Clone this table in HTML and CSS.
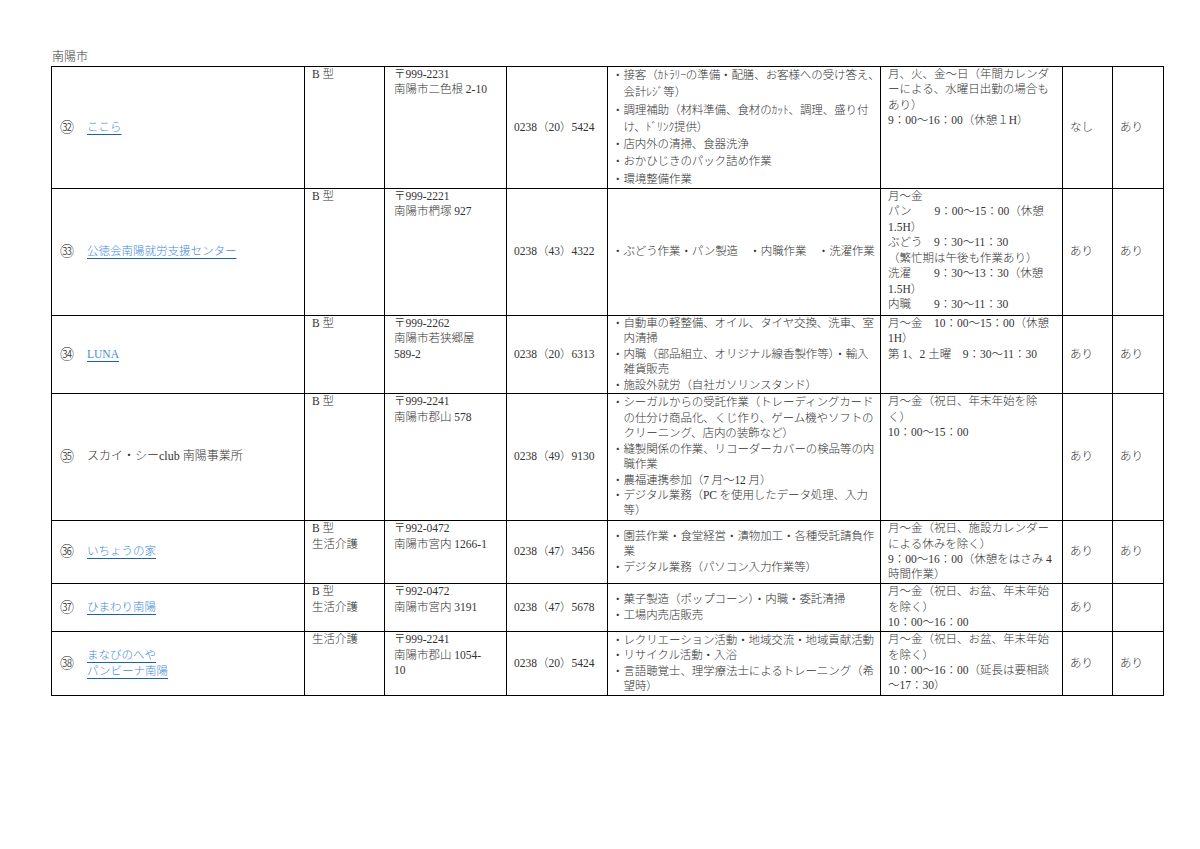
FILE: index.html
```html
<!DOCTYPE html>
<html lang="ja">
<head>
<meta charset="utf-8">
<title>南陽市</title>
<link rel="stylesheet" href="styles.css">
</head>
<body>
<div class="page">
  <div class="city">南陽市</div>
  <table class="list">
    <colgroup>
      <col class="c-name"><col class="c-type"><col class="c-addr"><col class="c-tel">
      <col class="c-work"><col class="c-time"><col class="c-a"><col class="c-b">
    </colgroup>
    <tr class="r1">
      <td class="name"><div class="nm"><span class="no">㉜</span><span class="lk"><a href="#">ここら</a></span></div></td>
      <td class="type">B 型</td>
      <td class="addr">〒999-2231<br>南陽市二色根 2-10</td>
      <td class="tel">0238（20）5424</td>
      <td class="work loose">
        <div class="it">・接客（ｶﾄﾗﾘｰの準備・配膳、お客様への受け答え、<br>会計ﾚｼﾞ等）</div>
        <div class="it">・調理補助（材料準備、食材のｶｯﾄ、調理、盛り付<br>け、ﾄﾞﾘﾝｸ提供）</div>
        <div class="it">・店内外の清掃、食器洗浄</div>
        <div class="it">・おかひじきのパック詰め作業</div>
        <div class="it">・環境整備作業</div>
      </td>
      <td class="time">月、火、金～日（年間カレンダ<br>ーによる、水曜日出勤の場合も<br>あり）<br>9：00～16：00（休憩１H）</td>
      <td class="yn">なし</td>
      <td class="yn">あり</td>
    </tr>
    <tr class="r2">
      <td class="name"><div class="nm"><span class="no">㉝</span><span class="lk"><a href="#">公徳会南陽就労支援センター</a></span></div></td>
      <td class="type">B 型</td>
      <td class="addr">〒999-2221<br>南陽市椚塚 927</td>
      <td class="tel">0238（43）4322</td>
      <td class="work">
        <div class="it">・ぶどう作業・パン製造　・内職作業　・洗濯作業</div>
      </td>
      <td class="time">月～金<br>パン　　9：00～15：00（休憩<br>1.5H）<br>ぶどう　9：30～11：30<br>（繁忙期は午後も作業あり）<br>洗濯　　9：30～13：30（休憩<br>1.5H）<br>内職　　9：30～11：30</td>
      <td class="yn">あり</td>
      <td class="yn">あり</td>
    </tr>
    <tr class="r3">
      <td class="name"><div class="nm"><span class="no">㉞</span><span class="lk"><a href="#">LUNA</a></span></div></td>
      <td class="type">B 型</td>
      <td class="addr">〒999-2262<br>南陽市若狭郷屋<br>589-2</td>
      <td class="tel">0238（20）6313</td>
      <td class="work">
        <div class="it">・自動車の軽整備、オイル、タイヤ交換、洗車、室<br>内清掃</div>
        <div class="it">・内職（部品組立、オリジナル線香製作等）・輸入<br>雑貨販売</div>
        <div class="it">・施設外就労（自社ガソリンスタンド）</div>
      </td>
      <td class="time">月～金　10：00～15：00（休憩<br>1H）<br>第 1、2 土曜　9：30～11：30</td>
      <td class="yn">あり</td>
      <td class="yn">あり</td>
    </tr>
    <tr class="r4">
      <td class="name"><div class="nm"><span class="no">㉟</span><span class="plain">スカイ・シーclub 南陽事業所</span></div></td>
      <td class="type">B 型</td>
      <td class="addr">〒999-2241<br>南陽市郡山 578</td>
      <td class="tel">0238（49）9130</td>
      <td class="work">
        <div class="it">・シーガルからの受託作業（トレーディングカード<br>の仕分け商品化、くじ作り、ゲーム機やソフトの<br>クリーニング、店内の装飾など）</div>
        <div class="it">・縫製関係の作業、リコーダーカバーの検品等の内<br>職作業</div>
        <div class="it">・農福連携参加（7 月～12 月）</div>
        <div class="it">・デジタル業務（PC を使用したデータ処理、入力<br>等）</div>
      </td>
      <td class="time">月～金（祝日、年末年始を除<br>く）<br>10：00～15：00</td>
      <td class="yn">あり</td>
      <td class="yn">あり</td>
    </tr>
    <tr class="r5">
      <td class="name"><div class="nm"><span class="no">㊱</span><span class="lk"><a href="#">いちょうの家</a></span></div></td>
      <td class="type">B 型<br>生活介護</td>
      <td class="addr">〒992-0472<br>南陽市宮内 1266-1</td>
      <td class="tel">0238（47）3456</td>
      <td class="work">
        <div class="it">・園芸作業・食堂経営・漬物加工・各種受託請負作<br>業</div>
        <div class="it">・デジタル業務（パソコン入力作業等）</div>
      </td>
      <td class="time">月～金（祝日、施設カレンダー<br>による休みを除く）<br>9：00～16：00（休憩をはさみ 4<br>時間作業）</td>
      <td class="yn">あり</td>
      <td class="yn">あり</td>
    </tr>
    <tr class="r6">
      <td class="name"><div class="nm"><span class="no">㊲</span><span class="lk"><a href="#">ひまわり南陽</a></span></div></td>
      <td class="type">B 型<br>生活介護</td>
      <td class="addr">〒992-0472<br>南陽市宮内 3191</td>
      <td class="tel">0238（47）5678</td>
      <td class="work">
        <div class="it">・菓子製造（ポップコーン）・内職・委託清掃</div>
        <div class="it">・工場内売店販売</div>
      </td>
      <td class="time">月～金（祝日、お盆、年末年始<br>を除く）<br>10：00～16：00</td>
      <td class="yn">あり</td>
      <td class="yn"></td>
    </tr>
    <tr class="r7">
      <td class="name"><div class="nm"><span class="no">㊳</span><span class="lk"><a href="#">まなびのへや</a><br><a href="#">パンビーナ南陽</a></span></div></td>
      <td class="type">生活介護</td>
      <td class="addr">〒999-2241<br>南陽市郡山 1054-<br>10</td>
      <td class="tel">0238（20）5424</td>
      <td class="work">
        <div class="it">・レクリエーション活動・地域交流・地域貢献活動</div>
        <div class="it">・リサイクル活動・入浴</div>
        <div class="it">・言語聴覚士、理学療法士によるトレーニング（希<br>望時）</div>
      </td>
      <td class="time">月～金（祝日、お盆、年末年始<br>を除く）<br>10：00～16：00（延長は要相談<br>～17：30）</td>
      <td class="yn">あり</td>
      <td class="yn">あり</td>
    </tr>
  </table>
</div>
</body>
</html>
```

FILE: styles.css
```css
html, body {
  margin: 0;
  padding: 0;
  background: #ffffff;
}

body {
  font-family: "Liberation Serif", "Noto Sans CJK JP", serif;
  font-size: 11.5px;
  font-weight: 300;
  color: #333333;
  line-height: 15.4px;
}

.page {
  padding: 50px 0 0 51px;
}

.city {
  height: 16px;
  padding-left: 1px;
  font-size: 12px;
}

.list {
  border-collapse: collapse;
  table-layout: fixed;
  width: 1112px;
}

.c-name { width: 253px; }
.c-type { width: 80px; }
.c-addr { width: 122px; }
.c-tel  { width: 101px; }
.c-work { width: 273px; }
.c-time { width: 182px; }
.c-a    { width: 50px; }
.c-b    { width: 51px; }

.list td {
  border: 1px solid #000;
  padding: 0 2px 0 7px;
  white-space: nowrap;
  overflow: hidden;
  vertical-align: middle;
}

.r1 { height: 121px; }
.r2 { height: 127px; }
.r3 { height: 78px; }
.r4 { height: 127px; }
.r5 { height: 63px; }
.r6 { height: 48px; }
.r7 { height: 64px; }

.list td.name {
  padding-left: 8px;
}

.nm {
  display: flex;
  align-items: center;
}

.no {
  width: 27px;
  flex: none;
  font-size: 14px;
}

.lk a {
  color: #3f8ad8;
  text-decoration: underline;
  text-decoration-color: #1560c0;
  text-underline-offset: 3px;
}

.plain {
  font-size: 12px;
}

.list td.type,
.list td.addr,
.list td.time {
  vertical-align: top;
  padding-top: 0;
}

.list td.addr {
  padding-left: 9px;
}

.list td.work {
  padding-left: 4px;
  padding-right: 0;
  letter-spacing: -0.1px;
}

.it {
  padding-left: 11.5px;
  text-indent: -11.5px;
}

.loose {
  line-height: 17.3px;
}

.list td.yn {
  padding-left: 7px;
}
```
